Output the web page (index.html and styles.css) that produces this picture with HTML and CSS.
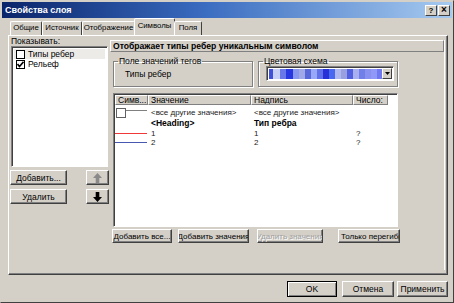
FILE: index.html
```html
<!DOCTYPE html>
<html lang="ru">
<head>
    <meta charset="UTF-8">
    <meta name="viewport" content="width=device-width, initial-scale=1.0">
    <title>Свойства слоя</title>
<link rel="stylesheet" href="styles.css">
</head>
<body>
<div class="dialog">
    <div class="titlebar">
        <span class="title">Свойства слоя</span>
        <div class="title-btns">
            <span class="title-btn">?</span>
            <span class="title-btn close">×</span>
        </div>
    </div>
    <div class="tabs">
        <span class="tab t1">Общие</span>
        <span class="tab t2">Источник</span>
        <span class="tab t3">Отображение</span>
        <span class="tab t4 active">Символы</span>
        <span class="tab t5">Поля</span>
    </div>
    <section class="panel">
        <div class="left-col">
            <div class="label">Показывать:</div>
            <div class="listbox">
                <div class="list-item selected"><span class="check"></span>Типы ребер</div>
                <div class="list-item"><span class="check"><svg width="7" height="7" viewBox="0 0 7 7"><polyline points="0.5,3 2.5,5.5 6.5,0.8" fill="none" stroke="#000" stroke-width="1.6"/></svg></span>Рельеф</div>
            </div>
            <div class="btn-row">
                <span class="btn wide">Добавить...</span>
                <span class="btn arrow"><svg width="9" height="10" viewBox="0 0 9 10"><polygon points="4.5,0 9,5 6.3,5 6.3,10 2.7,10 2.7,5 0,5" fill="#8a8a8a"/></svg></span>
            </div>
            <div class="btn-row">
                <span class="btn wide">Удалить</span>
                <span class="btn arrow"><svg width="9" height="10" viewBox="0 0 9 10"><polygon points="4.5,10 9,5 6.3,5 6.3,0 2.7,0 2.7,5 0,5" fill="#000"/></svg></span>
            </div>
        </div>
        <div class="right-col">
            <div class="caption">Отображает типы ребер уникальным символом</div>
            <div class="groups">
                <fieldset class="group field-group">
                    <legend>Поле значений тегов</legend>
                    <div class="group-text">Типы ребер</div>
                </fieldset>
                <fieldset class="group color-group">
                    <legend>Цветовая схема</legend>
                    <div class="ramp-combo">
                        <div class="ramp"></div>
                        <span class="combo-btn"><svg width="5" height="3" viewBox="0 0 5 3"><polygon points="0,0 5,0 2.5,3" fill="#000"/></svg></span>
                    </div>
                </fieldset>
            </div>
            <div class="table">
                <div class="thead">
                    <span class="th c1">Симв...</span>
                    <span class="th c2">Значение</span>
                    <span class="th c3">Надпись</span>
                    <span class="th c4">Число:</span>
                </div>
                <div class="row first">
                    <span class="c1 sym"><span class="sym-box"></span><span class="sym-line gray"></span></span>
                    <span class="c2">&lt;все другие значения&gt;</span>
                    <span class="c3">&lt;все другие значения&gt;</span>
                </div>
                <div class="row bold">
                    <span class="c1"></span>
                    <span class="c2">&lt;Heading&gt;</span>
                    <span class="c3">Тип ребра</span>
                </div>
                <div class="row">
                    <span class="c1 sym"><span class="sym-line red"></span></span>
                    <span class="c2">1</span>
                    <span class="c3">1</span>
                    <span class="c4">?</span>
                </div>
                <div class="row">
                    <span class="c1 sym"><span class="sym-line blue"></span></span>
                    <span class="c2">2</span>
                    <span class="c3">2</span>
                    <span class="c4">?</span>
                </div>
            </div>
            <div class="table-btns">
                <span class="btn b1">Добавить все...</span>
                <span class="btn b2">Добавить значения</span>
                <span class="btn b3 disabled">Удалить значения</span>
                <span class="btn b4">Только перегибы</span>
            </div>
        </div>
    </section>
    <div class="footer">
        <span class="btn ok">OK</span>
        <span class="btn cancel">Отмена</span>
        <span class="btn apply">Применить</span>
    </div>
</div>
</body>
</html>
```

FILE: styles.css
```css
    body {
        margin: 0;
        font-family: "Liberation Sans", Arial, sans-serif;
        font-size: 8.5px;
        color: #000;
    }
    .dialog {
        box-sizing: border-box;
        width: 454px;
        height: 303px;
        background: #d4d0c8;
        border: 1px solid;
        border-color: #d4d0c8 #404040 #404040 #d4d0c8;
        padding: 1px;
        display: flex;
        flex-direction: column;
    }
    .titlebar {
        height: 16px;
        display: flex;
        align-items: center;
        justify-content: space-between;
        background: linear-gradient(to right, #0a246a, #3a6cc0 45%, #a6caf0);
        padding: 0 2px 0 3px;
    }
    .title {
        color: #fff;
        font-weight: bold;
        font-size: 9px;
    }
    .title-btns {
        display: flex;
        gap: 1px;
    }
    .title-btn {
        box-sizing: border-box;
        width: 12px;
        height: 11px;
        background: #d4d0c8;
        border: 1px solid;
        border-color: #fff #404040 #404040 #fff;
        font-weight: bold;
        font-size: 8px;
        line-height: 9px;
        text-align: center;
    }
    .title-btn.close {
        font-size: 10px;
        line-height: 8px;
    }
    .tabs {
        display: flex;
        align-items: flex-end;
        height: 17px;
        padding-left: 8px;
        position: relative;
        z-index: 1;
        font-size: 7.8px;
    }
    .tab {
        box-sizing: border-box;
        height: 14px;
        line-height: 12px;
        text-align: center;
        border: 1px solid;
        border-bottom: none;
        border-color: #fff #404040 transparent #fff;
        border-radius: 2px 2px 0 0;
        white-space: nowrap;
    }
    .t1 { width: 32px; }
    .t2 { width: 40px; }
    .t3 { width: 53px; }
    .t4 { width: 41px; }
    .t5 { width: 28px; }
    .tab.active {
        height: 17px;
        line-height: 14px;
        background: #d4d0c8;
        margin: 0 -1px;
    }
    .panel {
        box-sizing: border-box;
        margin-left: 6px;
        width: 440px;
        height: 240px;
        border: 1px solid;
        border-color: #fff #404040 #404040 #fff;
        box-shadow: inset -1px -1px 0 #808080;
        display: flex;
        padding: 0 0 0 2px;
    }
    .left-col {
        width: 97px;
        display: flex;
        flex-direction: column;
    }
    .label {
        height: 9px;
        line-height: 9px;
        padding-top: 1px;
    }
    .listbox {
        box-sizing: border-box;
        height: 121px;
        background: #fff;
        border: 1px solid;
        border-color: #808080 #fff #fff #808080;
        box-shadow: inset 1px 1px 0 #404040;
        padding: 2px 2px;
    }
    .list-item {
        height: 10px;
        display: flex;
        align-items: center;
        gap: 3px;
        padding-left: 2px;
    }
    .list-item.selected {
        background: #ecebe8;
    }
    .check {
        box-sizing: border-box;
        width: 9px;
        height: 9px;
        border: 1px solid #000;
        background: #fff;
        display: flex;
        align-items: center;
        justify-content: center;
    }
    .btn {
        box-sizing: border-box;
        display: flex;
        align-items: center;
        justify-content: center;
        background: #d4d0c8;
        border: 1px solid;
        border-color: #fff #404040 #404040 #fff;
        box-shadow: inset -1px -1px 0 #808080;
        white-space: nowrap;
        overflow: hidden;
    }
    .btn-row {
        display: flex;
        justify-content: space-between;
        height: 15px;
        margin-top: 3px;
        padding-left: 0;
    }
    .btn-row + .btn-row {
        margin-top: 4px;
    }
    .btn.wide {
        width: 57px;
        margin-left: -1px;
    }
    .btn.arrow {
        width: 23px;
        margin-right: -1px;
    }
    .right-col {
        box-sizing: border-box;
        width: 335px;
        margin-left: 2px;
        margin-top: 4px;
        height: 230px;
        border-right: 1px solid #fff;
        display: flex;
        flex-direction: column;
    }
    .caption {
        box-sizing: border-box;
        height: 12px;
        border: 1px solid;
        border-color: #fff #808080 #808080 #fff;
        font-weight: bold;
        font-size: 8.6px;
        line-height: 10px;
        padding-left: 2px;
    }
    .groups {
        display: flex;
        margin-top: 5px;
        padding-left: 3px;
        gap: 5px;
    }
    .group {
        box-sizing: border-box;
        margin: 0;
        width: 140px;
        height: 30px;
        border: 1px solid #808080;
        box-shadow: 1px 1px 0 #fff, inset 1px 1px 0 #fff;
        padding: 0 3px 0 4px;
    }
    .group legend {
        padding: 0 1px;
        line-height: 8px;
        height: 8px;
    }
    .group-text {
        padding-left: 7px;
        margin-top: 4px;
    }
    .ramp-combo {
        box-sizing: border-box;
        height: 15px;
        margin-top: 1px;
        margin-left: 3px;
        display: flex;
        border: 1px solid;
        border-color: #808080 #fff #fff #808080;
        box-shadow: inset 1px 1px 0 #404040;
        padding: 2px 1px 1px 2px;
        background: #fff;
    }
    .ramp {
        flex: 1;
        background: linear-gradient(to right,
            #4050d8 0 4px, #c8d0f8 4px 11px, #6878e8 11px 17px, #2838e0 17px 24px,
            #8898f0 24px 30px, #a0a8e8 30px 36px, #5868d8 36px 42px, #98a8f8 42px 48px,
            #6070e8 48px 54px, #2830d8 54px 60px, #4868f0 60px 66px, #b0b8f0 66px 72px,
            #98a0e0 72px 78px, #5060e0 78px 84px, #a8b0f0 84px 90px, #7080e8 90px 96px,
            #8890f0 96px 102px, #9098f8 102px 108px, #7078f0 108px 120px);
    }
    .combo-btn {
        box-sizing: border-box;
        width: 10px;
        margin-top: -1px;
        margin-bottom: 0;
        background: #d4d0c8;
        border: 1px solid;
        border-color: #fff #404040 #404040 #fff;
        display: flex;
        align-items: center;
        justify-content: center;
    }
    .table {
        box-sizing: border-box;
        width: 285px;
        height: 134px;
        margin-top: 6px;
        margin-left: 3px;
        background: #fff;
        border: 1px solid;
        border-color: #808080 #fff #fff #808080;
        box-shadow: inset 1px 1px 0 #404040;
        padding: 1px 0 0 1px;
    }
    .thead, .row {
        display: grid;
        grid-template-columns: 33px 103px 102px 35px;
    }
    .thead {
        height: 10px;
    }
    .th {
        box-sizing: border-box;
        background: #d4d0c8;
        border: 1px solid;
        border-color: #fff #808080 #808080 #fff;
        line-height: 8px;
        padding-left: 2px;
        white-space: nowrap;
        overflow: hidden;
    }
    .row {
        height: 9px;
        line-height: 9px;
        font-size: 8px;
        color: #222;
    }
    .row.first {
        height: 13px;
        line-height: 11px;
        align-items: end;
    }
    .row.bold {
        font-weight: bold;
        color: #000;
        font-size: 8.5px;
        height: 11px;
        line-height: 10px;
    }
    .row .c2, .row .c3, .row .c4 {
        padding-left: 3px;
    }
    .sym {
        display: flex;
        align-items: center;
        height: 100%;
    }
    .sym-box {
        box-sizing: border-box;
        width: 10px;
        height: 10px;
        margin-left: 1px;
        border: 1px solid #606060;
        background: #fff;
        align-self: flex-end;
    }
    .sym-line {
        flex: 1;
        height: 1px;
        margin-right: 1px;
    }
    .sym-line.gray { background: #808080; margin-top: -2px; }
    .sym-line.red { background: #f03838; }
    .sym-line.blue { background: #4858b0; }
    .table-btns {
        display: flex;
        height: 14px;
        margin-top: 2px;
        padding-left: 2px;
        font-size: 8px;
    }
    .b1 { width: 60px; }
    .b2 { width: 71px; margin-left: 6px; }
    .b3 { width: 66px; margin-left: 8px; }
    .b4 { width: 62px; margin-left: 15px; justify-content: flex-start; padding-left: 2px; }
    .btn.disabled {
        color: #a0a0a0;
        text-shadow: 1px 1px 0 #fff;
    }
    .footer {
        display: flex;
        justify-content: flex-end;
        margin-top: 6px;
        padding-right: 4px;
        height: 16px;
    }
    .ok {
        width: 50px;
        border: 1px solid #000;
        box-shadow: inset 1px 1px 0 #fff, inset -1px -1px 0 #808080;
    }
    .cancel { width: 52px; margin-left: 5px; }
    .apply { width: 51px; margin-left: 3px; }
```
